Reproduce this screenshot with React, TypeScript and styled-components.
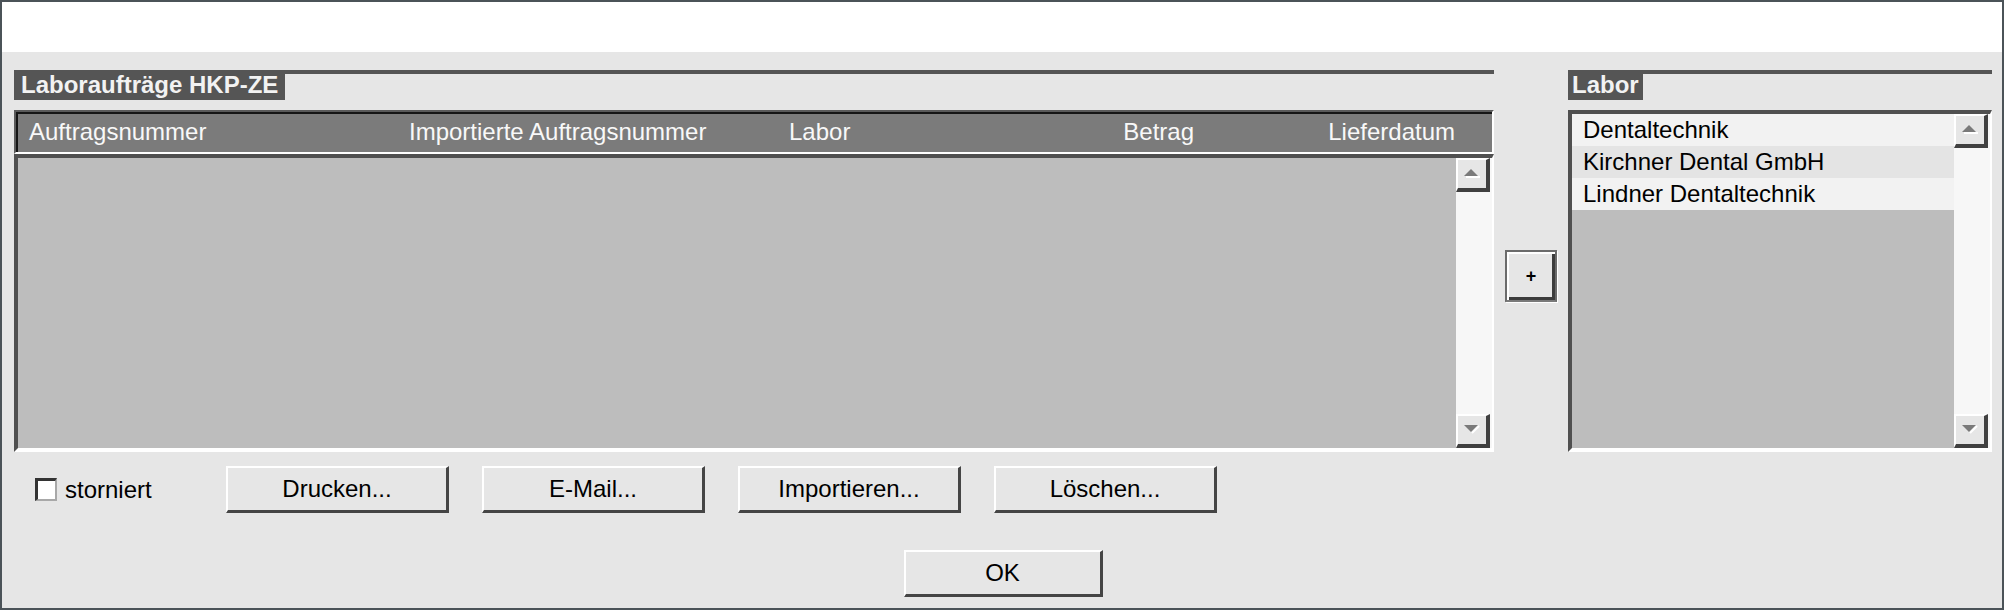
import React from "react";
import styled, { createGlobalStyle } from "styled-components";

const Global = createGlobalStyle`
  html, body { margin: 0; padding: 0; background: #e6e6e6; }
  body { font-family: "Liberation Sans", Arial, sans-serif; }
  * { box-sizing: border-box; }
`;

const Window = styled.div`
  width: 2004px;
  height: 610px;
  border: 2px solid #4b5358;
  background: #e6e6e6;
  display: flex;
  flex-direction: column;
`;

const TopStrip = styled.div`
  height: 50px;
  flex: none;
  background: #ffffff;
`;

const Content = styled.div`
  flex: 1;
  display: flex;
  flex-direction: column;
  padding: 18px 10px 11px 12px;
`;

const MainRow = styled.div`
  display: flex;
  align-items: flex-start;
  flex: none;
`;

const Section = styled.section<{ $width: number }>`
  width: ${(p) => p.$width}px;
  flex: none;
  display: flex;
  flex-direction: column;
`;

const SectionHead = styled.div`
  height: 30px;
  border-top: 4px solid #555555;
  margin-bottom: 10px;
  display: flex;
`;

const SectionTitle = styled.h2<{ $pad: number }>`
  margin: -4px 0 0;
  height: 30px;
  padding: 0 ${(p) => p.$pad}px;
  background: #555555;
  color: #f2f2f2;
  font: bold 24px/30px "Liberation Sans", Arial, sans-serif;
  white-space: nowrap;
`;

const Table = styled.div`
  height: 342px;
  display: flex;
  flex-direction: column;
`;

const HeaderRow = styled.div`
  height: 44px;
  flex: none;
  display: grid;
  grid-template-columns: 380px 380px 1fr 120px 261px 26px;
  align-items: center;
  padding-left: 2px;
  background: #7b7b7b;
  border-style: solid;
  border-width: 2px;
  border-color: #5a5a5a #ffffff #ffffff #5a5a5a;
  box-shadow: inset 2px 2px 0 #151515;
  color: #f8f8f8;
  font-size: 24px;
`;

const HeaderCell = styled.div<{ $right?: boolean }>`
  padding: 0 11px;
  text-align: ${(p) => (p.$right ? "right" : "left")};
  white-space: nowrap;
`;

const SunkenBody = styled.div`
  flex: 1;
  display: flex;
  background: #bdbdbd;
  border-style: solid;
  border-width: 4px 2px 4px 4px;
  border-color: #505050 #ffffff #ffffff #505050;
`;

const EmptyArea = styled.div`
  flex: 1;
`;

const ScrollTrack = styled.div`
  width: 36px;
  flex: none;
  padding-right: 2px;
  background: #f7f7f7;
  display: flex;
  flex-direction: column;
  justify-content: space-between;
`;

const ScrollButton = styled.div`
  width: 34px;
  height: 34px;
  background: #e6e6e6;
  border-style: solid;
  border-width: 2px 4px 4px 2px;
  border-color: #ffffff #404040 #404040 #ffffff;
  display: flex;
  align-items: center;
  justify-content: center;
`;

const MiddleColumn = styled.div`
  width: 74px;
  flex: none;
  display: flex;
  justify-content: center;
  padding-top: 180px;
`;

const PlusButton = styled.button`
  width: 52px;
  height: 52px;
  padding: 0;
  background: #e6e6e6;
  border: 2px solid;
  border-color: #6b6b6b #6b6b6b #7a7a7a #6b6b6b;
  box-shadow: inset 2px 2px 0 #ffffff, inset -3px -3px 0 #3c3c3c, 1px 1px 0 #ffffff;
  color: #000;
  font: bold 18px/1 "Liberation Sans", Arial, sans-serif;
  display: flex;
  align-items: center;
  justify-content: center;
`;

const LaborList = styled.ul`
  flex: 1;
  margin: 0;
  padding: 0;
  list-style: none;
`;

const LaborItem = styled.li<{ $alt?: boolean }>`
  height: 32px;
  padding-left: 11px;
  line-height: 32px;
  font-size: 24px;
  color: #000;
  background: ${(p) => (p.$alt ? "#e4e4e4" : "#f2f2f2")};
  white-space: nowrap;
`;

const ActionRow = styled.div`
  display: flex;
  align-items: center;
  gap: 33px;
  height: 47px;
  margin-top: 14px;
  padding-left: 21px;
`;

const CheckGroup = styled.label`
  width: 158px;
  flex: none;
  display: flex;
  align-items: center;
  gap: 8px;
  font-size: 24px;
  color: #000;
`;

const CheckBox = styled.span`
  width: 22px;
  height: 23px;
  background: #ffffff;
  border-style: solid;
  border-width: 3px 2px 2px 3px;
  border-color: #333333 #a8a8a8 #a8a8a8 #333333;
`;

const ActionButton = styled.button<{ $width?: number }>`
  width: ${(p) => p.$width ?? 223}px;
  height: 47px;
  flex: none;
  padding: 0;
  background: #e6e6e6;
  border-style: solid;
  border-width: 2px 3px 3px 2px;
  border-color: #ffffff #454545 #454545 #ffffff;
  color: #000;
  font: 24px/1 "Liberation Sans", Arial, sans-serif;
`;

const OkRow = styled.div`
  display: flex;
  justify-content: center;
  margin-top: 37px;
`;

const UpArrow = () => (
  <svg width="16" height="11" viewBox="0 0 16 11">
    <polygon points="0,7 7,0 14,7" fill="#7a7a7a" />
    <rect x="2" y="7" width="14" height="2" fill="#ffffff" />
  </svg>
);

const DownArrow = () => (
  <svg width="16" height="11" viewBox="0 0 16 11">
    <polygon points="0,0 14,0 7,7" fill="#7a7a7a" />
    <polyline points="15,1 8,8" stroke="#ffffff" strokeWidth="2" fill="none" />
  </svg>
);

const Scrollbar = () => (
  <ScrollTrack>
    <ScrollButton>
      <UpArrow />
    </ScrollButton>
    <ScrollButton>
      <DownArrow />
    </ScrollButton>
  </ScrollTrack>
);

const labs = ["Dentaltechnik", "Kirchner Dental GmbH", "Lindner Dentaltechnik"];

export default function App() {
  return (
    <>
      <Global />
      <Window>
        <TopStrip />
        <Content>
          <MainRow>
            <Section $width={1480}>
              <SectionHead>
                <SectionTitle $pad={7}>Laboraufträge HKP-ZE</SectionTitle>
              </SectionHead>
              <Table>
                <HeaderRow>
                  <HeaderCell>Auftragsnummer</HeaderCell>
                  <HeaderCell>Importierte Auftragsnummer</HeaderCell>
                  <HeaderCell>Labor</HeaderCell>
                  <HeaderCell $right>Betrag</HeaderCell>
                  <HeaderCell $right>Lieferdatum</HeaderCell>
                  <div />
                </HeaderRow>
                <SunkenBody>
                  <EmptyArea />
                  <Scrollbar />
                </SunkenBody>
              </Table>
            </Section>
            <MiddleColumn>
              <PlusButton>+</PlusButton>
            </MiddleColumn>
            <Section $width={424}>
              <SectionHead>
                <SectionTitle $pad={4}>Labor</SectionTitle>
              </SectionHead>
              <Table>
                <SunkenBody>
                  <LaborList>
                    {labs.map((l, i) => (
                      <LaborItem key={l} $alt={i % 2 === 1}>
                        {l}
                      </LaborItem>
                    ))}
                  </LaborList>
                  <Scrollbar />
                </SunkenBody>
              </Table>
            </Section>
          </MainRow>
          <ActionRow>
            <CheckGroup>
              <CheckBox />
              storniert
            </CheckGroup>
            <ActionButton>Drucken...</ActionButton>
            <ActionButton>E-Mail...</ActionButton>
            <ActionButton>Importieren...</ActionButton>
            <ActionButton>Löschen...</ActionButton>
          </ActionRow>
          <OkRow>
            <ActionButton $width={199}>OK</ActionButton>
          </OkRow>
        </Content>
      </Window>
    </>
  );
}
